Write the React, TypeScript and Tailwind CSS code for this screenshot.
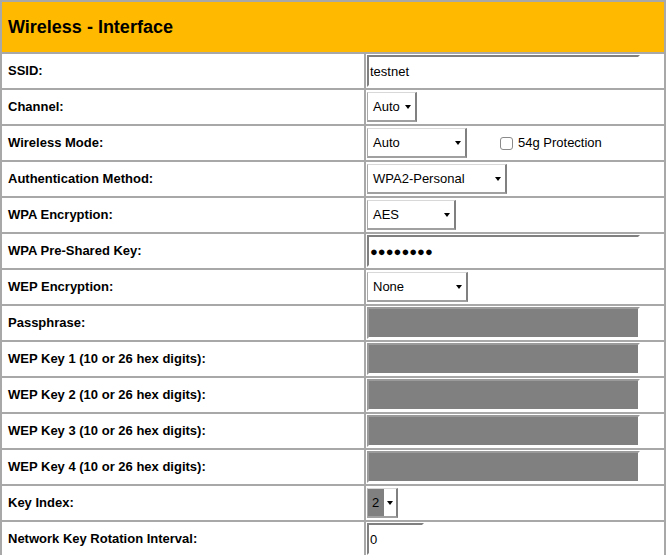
import React from "react";

const font = { fontFamily: '"Liberation Sans", Arial, sans-serif' };

function Row({ label, children }: { label: string; children: React.ReactNode }) {
  return (
    <div className="flex h-[36px] border-t-2 border-[#a8a8a8]">
      <div className="w-[364px] border-r-2 border-[#a8a8a8] flex items-center pl-[6px] text-[13px] font-bold text-black">
        {label}
      </div>
      <div className="flex-1 flex items-start pl-[1px] pt-[1px]">{children}</div>
    </div>
  );
}

function TextBox({ value, width, disabled }: { value?: string; width: string; disabled?: boolean }) {
  return (
    <div
      className={`${width} h-[32px] border-2 flex items-center pl-[1px] pt-[2px] text-[13px] text-black ${
        disabled
          ? "bg-[#808080] border-t-[#9a9a9a] border-l-[#9a9a9a] border-r-white border-b-white"
          : "bg-white border-t-[#808080] border-l-[#808080] border-r-white border-b-white"
      }`}
    >
      {value}
    </div>
  );
}

function Arrow() {
  return (
    <svg width="6" height="4" viewBox="0 0 6 4" className="shrink-0">
      <path d="M0 0h6L3 4z" fill="#000" />
    </svg>
  );
}

function Select({ value, width }: { value: string; width: string }) {
  return (
    <div
      className={`${width} h-[30px] mt-[1px] bg-white flex items-center justify-between pl-[5px] pr-[4px] pt-[1px] text-[13px] text-black border-t border-l border-t-[#d8d8d8] border-l-[#a8a8a8] border-r-2 border-b-2 border-r-[#808080] border-b-[#a0a0a0]`}
    >
      <span>{value}</span>
      <Arrow />
    </div>
  );
}

export default function App() {
  return (
    <div className="w-[666px] h-[555px] bg-white overflow-hidden" style={font}>
      <div className="w-[666px] border-x-2 border-[#a8a8a8]">
        <div className="h-[52px] bg-[#ffba00] border-t-2 border-[#a8a8a8] flex items-center pl-[6px] pt-[1px] text-[18px] font-bold text-black">
          Wireless - Interface
        </div>
        <Row label="SSID:">
          <TextBox value="testnet" width="w-[273px]" />
        </Row>
        <Row label="Channel:">
          <Select value="Auto" width="w-[50px]" />
        </Row>
        <Row label="Wireless Mode:">
          <div className="flex items-center">
            <Select value="Auto" width="w-[100px]" />
            <div className="ml-[33px] mt-[1px] flex items-center gap-[5px] text-[13px] text-black">
              <span className="w-[13px] h-[13px] border border-[#8a8a8a] rounded-[3px] bg-white" />
              <span>54g Protection</span>
            </div>
          </div>
        </Row>
        <Row label="Authentication Method:">
          <Select value="WPA2-Personal" width="w-[140px]" />
        </Row>
        <Row label="WPA Encryption:">
          <Select value="AES" width="w-[89px]" />
        </Row>
        <Row label="WPA Pre-Shared Key:">
          <TextBox value="●●●●●●●●" width="w-[273px]" />
        </Row>
        <Row label="WEP Encryption:">
          <Select value="None" width="w-[101px]" />
        </Row>
        <Row label="Passphrase:">
          <TextBox disabled width="w-[273px]" />
        </Row>
        <Row label="WEP Key 1 (10 or 26 hex digits):">
          <TextBox disabled width="w-[273px]" />
        </Row>
        <Row label="WEP Key 2 (10 or 26 hex digits):">
          <TextBox disabled width="w-[273px]" />
        </Row>
        <Row label="WEP Key 3 (10 or 26 hex digits):">
          <TextBox disabled width="w-[273px]" />
        </Row>
        <Row label="WEP Key 4 (10 or 26 hex digits):">
          <TextBox disabled width="w-[273px]" />
        </Row>
        <Row label="Key Index:">
          <div className="w-[31px] h-[30px] mt-[1px] bg-white flex items-center justify-between pr-[3px] text-[13px] text-black border-t border-l border-t-[#d8d8d8] border-l-[#a8a8a8] border-r-2 border-b-2 border-r-[#808080] border-b-[#a0a0a0]">
            <span className="h-full w-[16px] bg-[#808080] flex items-center pl-[4px] pt-[1px]">2</span>
            <Arrow />
          </div>
        </Row>
        <Row label="Network Key Rotation Interval:">
          <TextBox value="0" width="w-[57px]" />
        </Row>
      </div>
    </div>
  );
}
